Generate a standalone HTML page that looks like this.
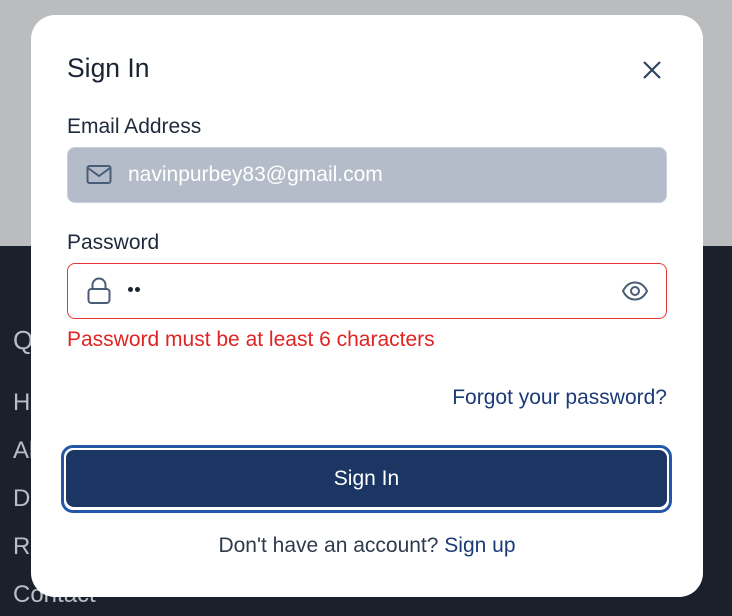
<!DOCTYPE html>
<html><head><style>
*{box-sizing:border-box;margin:0;padding:0}
body{width:732px;height:616px;overflow:hidden;position:relative;font-family:"Liberation Sans",Arial,sans-serif;background:#1a212d}
.top{position:absolute;left:0;top:0;width:732px;height:246px;background:#bbbcbe}
.ft{position:absolute;left:13px;color:#b9bec6;font-size:24px}
.modal{position:absolute;left:31px;top:15px;width:672px;height:582px;background:#fff;border-radius:24px}
.abs{position:absolute}
</style></head><body>
<div class="top"></div>
<div class="ft" style="top:325px;font-size:26px">Q</div>
<div class="ft" style="top:389px">H</div>
<div class="ft" style="top:437px">Al</div>
<div class="ft" style="top:485px">D</div>
<div class="ft" style="top:533px">R</div>
<div class="ft" style="top:581px">Contact</div>
<div class="modal">
<div class="abs" style="left:36px;top:38px;font-size:26.5px;color:#1a2332">Sign In</div>
<svg class="abs" style="left:610px;top:44px" width="22" height="22" viewBox="0 0 22 22"><path d="M3 3L19 19M19 3L3 19" stroke="#2f4560" stroke-width="2.2"/></svg>
<div class="abs" style="left:36px;top:100px;font-size:21px;color:#1e2a3b">Email Address</div>
<div class="abs" style="left:36px;top:132px;width:600px;height:56px;background:#b5bcc9;border:1px solid #c9d0db;border-radius:8px"></div>
<svg class="abs" style="left:55px;top:149px" width="26" height="22" viewBox="0 0 26 22"><rect x="1.5" y="2" width="23" height="17" rx="2" fill="none" stroke="#4a5d77" stroke-width="2"/><path d="M2 4L13 12L24 4" fill="none" stroke="#4a5d77" stroke-width="2"/></svg>
<div class="abs" style="left:97px;top:148px;font-size:21px;color:#fff">navinpurbey83@gmail.com</div>
<div class="abs" style="left:36px;top:216px;font-size:21px;color:#1e2a3b">Password</div>
<div class="abs" style="left:36px;top:248px;width:600px;height:56px;background:#fff;border:1px solid #e53935;border-radius:8px"></div>
<svg class="abs" style="left:56px;top:262px" width="24" height="28" viewBox="0 0 24 28"><rect x="1.5" y="12" width="21" height="14" rx="3" fill="none" stroke="#4a5d77" stroke-width="2"/><path d="M5.5 12V8a6.5 6.5 0 0 1 13 0v4" fill="none" stroke="#4a5d77" stroke-width="2"/></svg>
<div class="abs" style="left:97px;top:272px;width:5px;height:5px;border-radius:50%;background:#1a2332"></div>
<div class="abs" style="left:104px;top:272px;width:5px;height:5px;border-radius:50%;background:#1a2332"></div>
<svg class="abs" style="left:590px;top:264px" width="28" height="24" viewBox="0 0 28 24"><path d="M2 12C5 6 9 3.5 14 3.5S23 6 26 12C23 18 19 20.5 14 20.5S5 18 2 12Z" fill="none" stroke="#4a5d77" stroke-width="2"/><circle cx="14" cy="12" r="4" fill="none" stroke="#4a5d77" stroke-width="2"/></svg>
<div class="abs" style="left:36px;top:313px;font-size:21px;color:#e02424">Password must be at least 6 characters</div>
<div class="abs" style="right:36px;top:371px;font-size:21px;color:#1c3a78">Forgot your password?</div>
<div class="abs" style="left:30px;top:430px;width:611px;height:68px;border:3px solid #2557a8;border-radius:12px"></div>
<div class="abs" style="left:35px;top:435px;width:601px;height:57px;background:#1c3664;border-radius:8px;color:#fff;font-size:21px;text-align:center;line-height:58px">Sign In</div>
<div class="abs" style="left:0;width:672px;top:519px;font-size:21px;color:#2f3b4c;text-align:center">Don't have an account? <span style="color:#1c3a78">Sign up</span></div>
</div>
</body></html>
